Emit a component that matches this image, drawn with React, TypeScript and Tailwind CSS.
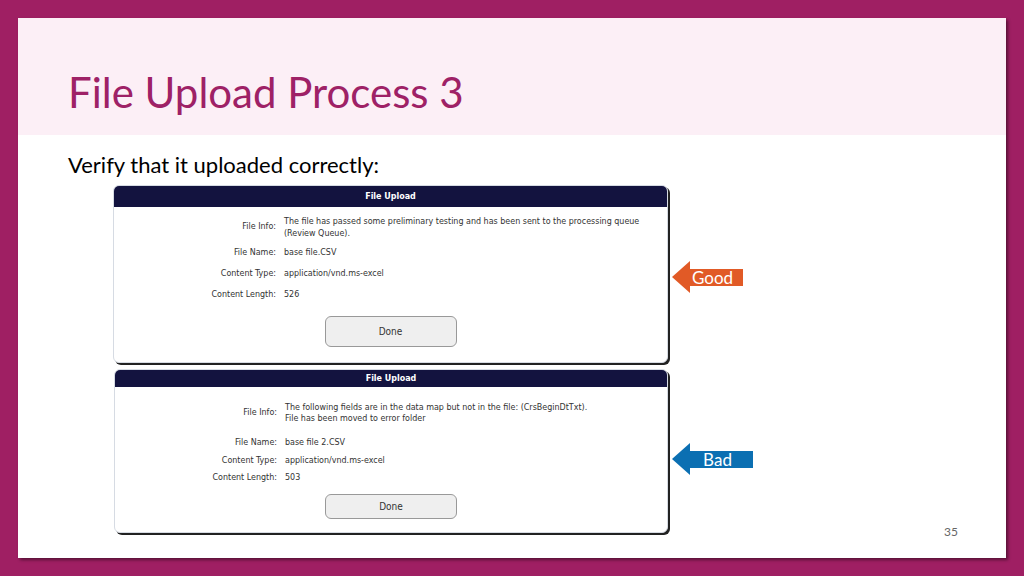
import React from "react";

const dlgFont = { fontFamily: '"DejaVu Sans Condensed", "DejaVu Sans", Verdana, sans-serif', fontStretch: "condensed" as const };

function Row({ label, children, h }: { label: string; children: React.ReactNode; h: string }) {
  return (
    <div className={`flex items-center ${h}`}>
      <div className="w-[170px] text-right pr-[8px] text-[#333]">{label}</div>
      <div className="flex-1 text-[#333]">{children}</div>
    </div>
  );
}

function Arrow({ color, text, shaftW, top }: { color: string; text: string; shaftW: string; top: string }) {
  return (
    <div className={`flex items-center ${top}`}>
      <div
        className="w-0 h-0 border-t-[16px] border-b-[16px] border-r-[18px] border-t-transparent border-b-transparent"
        style={{ borderRightColor: color }}
      />
      <div
        className={`h-[17px] ${shaftW} flex items-center justify-center pr-[8px] text-white text-[17px] leading-none`}
        style={{ backgroundColor: color, fontFamily: 'Lato, "Open Sans", sans-serif' }}
      >
        {text}
      </div>
    </div>
  );
}

export default function App() {
  return (
    <div className="w-[1024px] h-[576px] bg-[#9F1F63] pt-[18px] pl-[18px] overflow-hidden">
      <div className="relative w-[988px] h-[540px] bg-white shadow-[2px_2px_3px_rgba(0,0,0,0.45)] flex flex-col">
        <div className="h-[117px] bg-[#FCEFF6] flex items-end pl-[50px] pb-[22px]">
          <h1
            className="text-[42px] leading-none text-[#9E2166]"
            style={{ fontFamily: 'Lato, "Open Sans", sans-serif' }}
          >
            File Upload Process 3
          </h1>
        </div>
        <div className="pl-[50px] pt-[19px]">
          <p className="text-[22px] leading-none text-black" style={{ fontFamily: 'Lato, "Open Sans", sans-serif' }}>
            Verify that it uploaded correctly:
          </p>
        </div>
        <div className="pl-[95px] pt-[9px] flex flex-col gap-[6px]" style={dlgFont}>
          <div className="flex items-start">
            <div className="w-[555px] rounded-[6px] border border-[#d6dbe3] bg-white shadow-[2px_2px_0px_#222] overflow-hidden text-[8.9px]">
              <div className="h-[21px] bg-[#13133F] text-white font-bold flex items-center justify-center">
                File Upload
              </div>
              <div className="pt-[8px] pb-[15px]">
                <div className="flex items-center">
                  <div className="w-[170px] text-right pr-[8px] text-[#333]">File Info:</div>
                  <div className="flex-1 leading-[12px] text-[#333]">
                    The file has passed some preliminary testing and has been sent to the processing queue
                    <br />
                    (Review Queue).
                  </div>
                </div>
                <div className="mt-[3px]">
                  <Row label="File Name:" h="h-[21px]">base file.CSV</Row>
                  <Row label="Content Type:" h="h-[21px]">application/vnd.ms-excel</Row>
                  <Row label="Content Length:" h="h-[21px]">526</Row>
                </div>
                <div className="flex justify-center mt-[11px]">
                  <div className="w-[132px] h-[31px] rounded-[6px] border border-[#999] bg-[#EFEFEF] flex items-center justify-center text-[#333] text-[10px]">
                    Done
                  </div>
                </div>
              </div>
            </div>
            <Arrow color="#E15A26" text="Good" shaftW="w-[53px]" top="mt-[76px] ml-[4px]" />
          </div>
          <div className="flex items-start">
            <div className="w-[554px] ml-[1px] rounded-[6px] border border-[#d6dbe3] bg-white shadow-[2px_2px_0px_#222] overflow-hidden text-[8.9px]">
              <div className="h-[17px] bg-[#13133F] text-white font-bold flex items-center justify-center">
                File Upload
              </div>
              <div className="pt-[15px] pb-[13px]">
                <div className="flex items-center">
                  <div className="w-[170px] text-right pr-[8px] text-[#333]">File Info:</div>
                  <div className="flex-1 leading-[11px] text-[#333]">
                    The following fields are in the data map but not in the file: (CrsBeginDtTxt).
                    <br />
                    File has been moved to error folder
                  </div>
                </div>
                <div className="mt-[10px]">
                  <Row label="File Name:" h="h-[18px]">base file 2.CSV</Row>
                  <Row label="Content Type:" h="h-[17px]">application/vnd.ms-excel</Row>
                  <Row label="Content Length:" h="h-[18px]">503</Row>
                </div>
                <div className="flex justify-center mt-[7px]">
                  <div className="w-[132px] h-[25px] rounded-[6px] border border-[#999] bg-[#EFEFEF] flex items-center justify-center text-[#333] text-[10px]">
                    Done
                  </div>
                </div>
              </div>
            </div>
            <Arrow color="#0B6FB2" text="Bad" shaftW="w-[63px]" top="mt-[74px] ml-[4px]" />
          </div>
        </div>
        <div
          className="absolute right-[48px] bottom-[17px] text-[12px] text-[#666]"
          style={{ fontFamily: 'Lato, "Open Sans", sans-serif' }}
        >
          35
        </div>
      </div>
    </div>
  );
}
